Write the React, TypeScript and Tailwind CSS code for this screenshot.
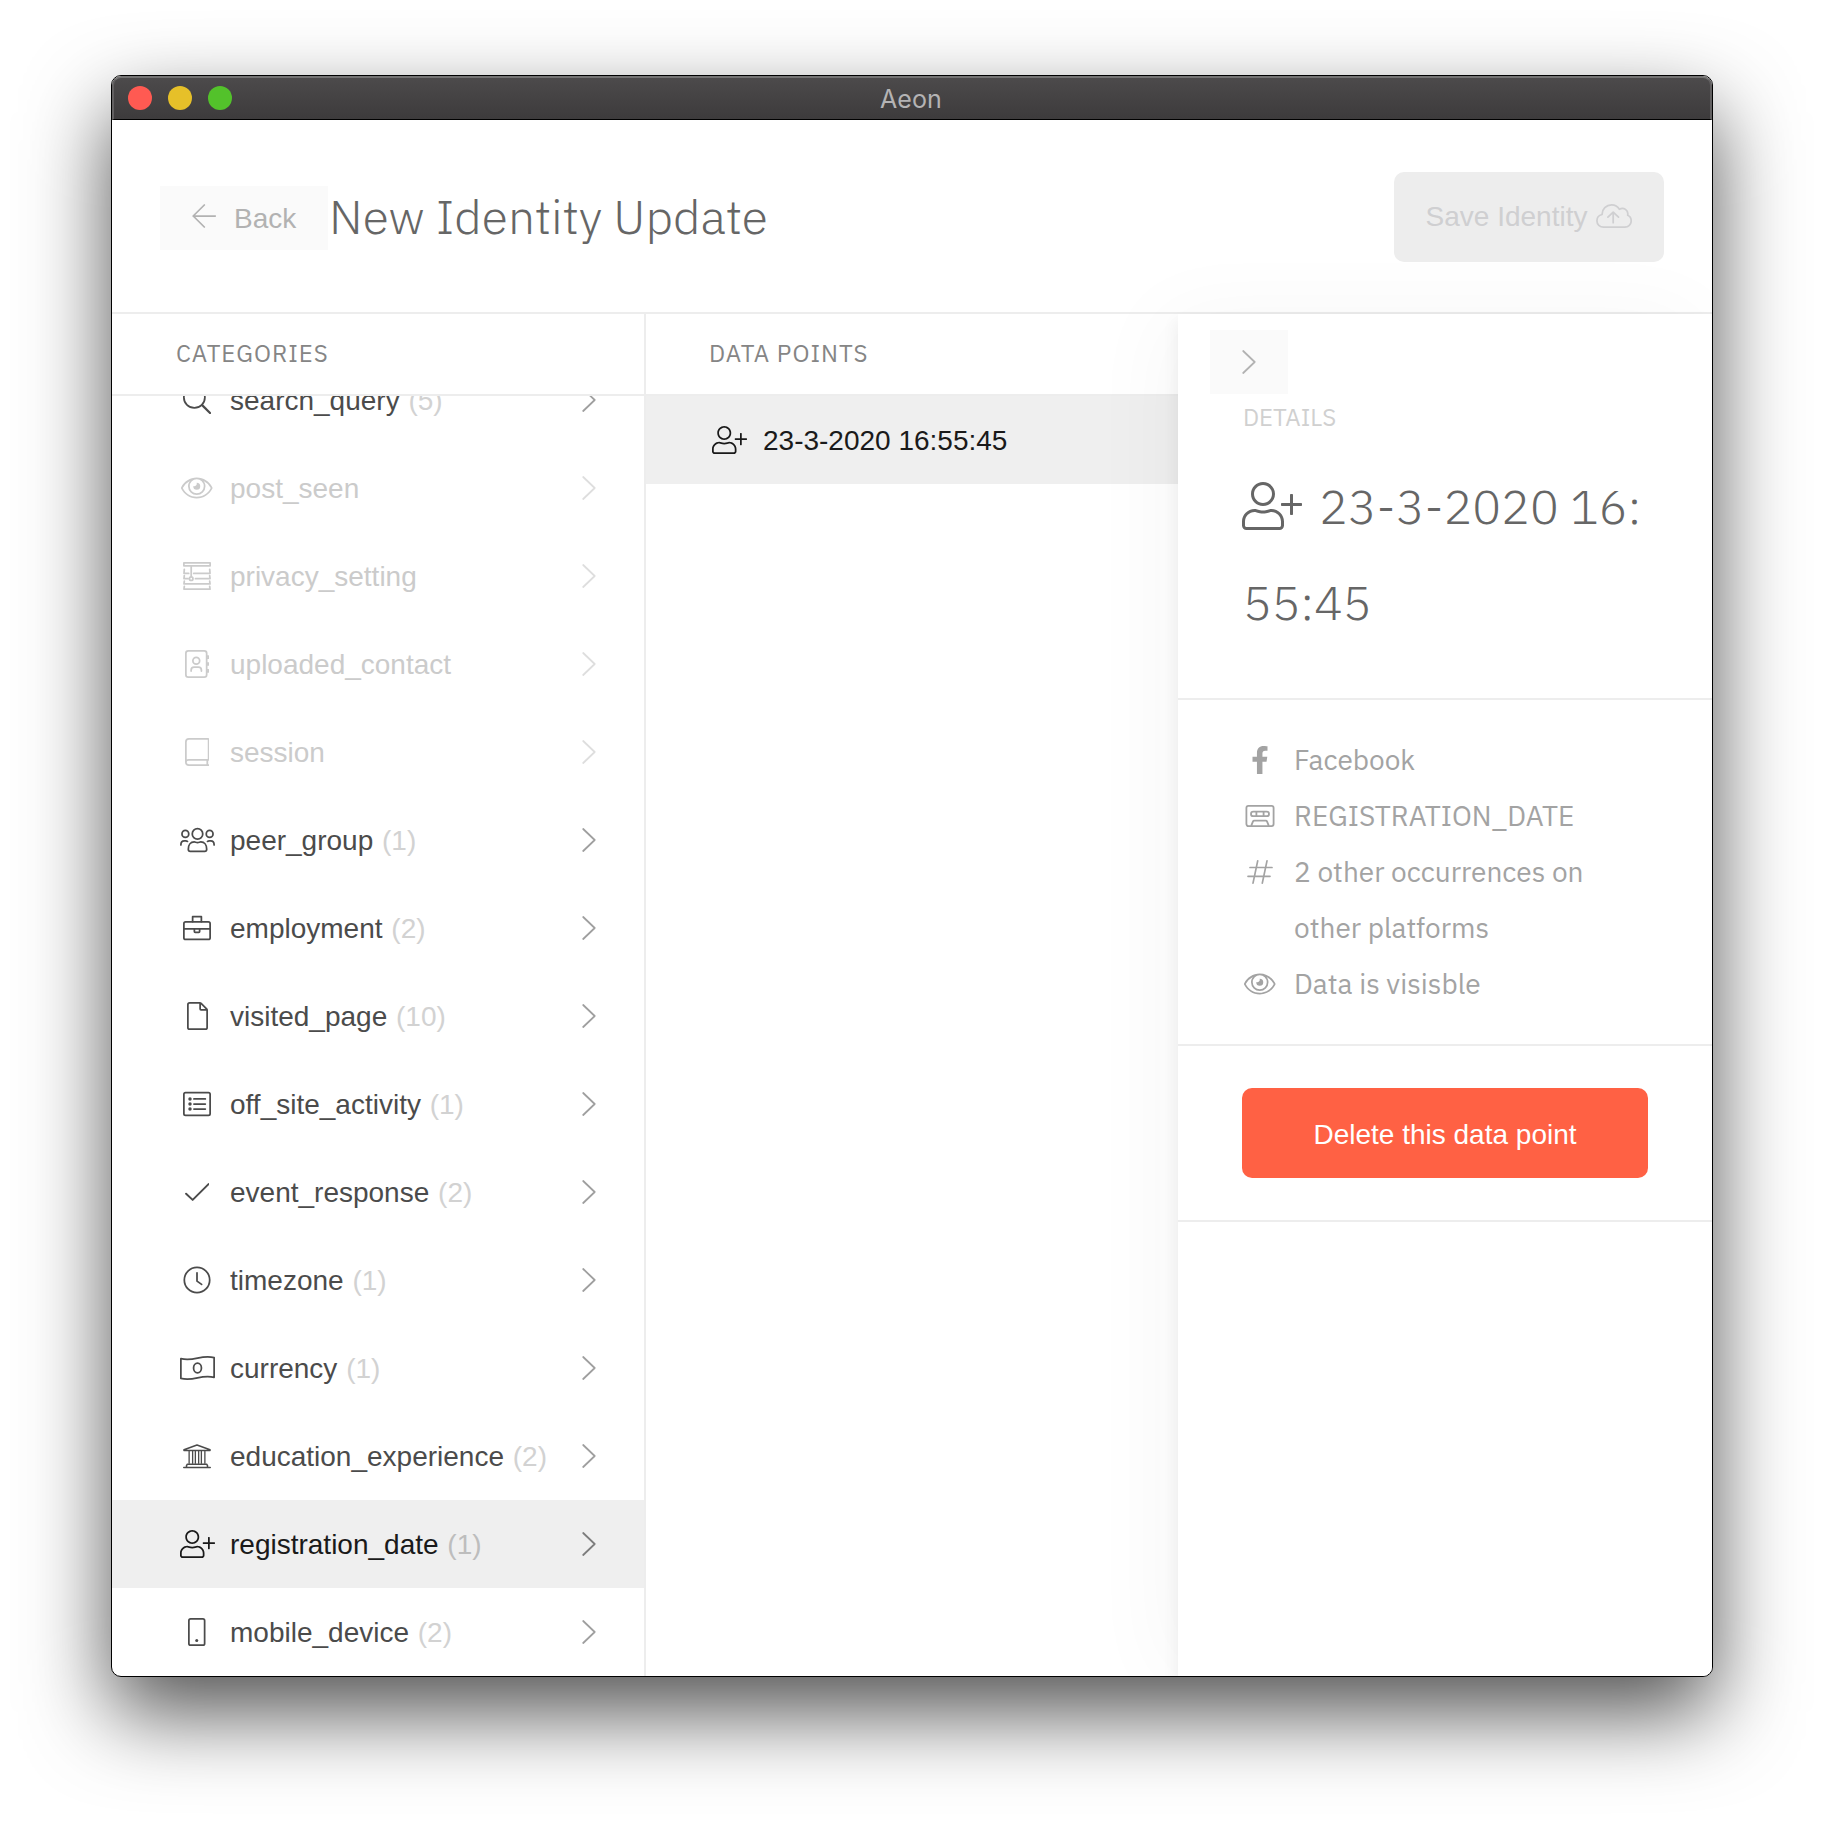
import type { ReactNode } from "react";
import { FaFacebookF } from "react-icons/fa";

const SANS = "font-['IBM_Plex_Sans','Noto_Sans',sans-serif]";
const ARIAL = "font-['Liberation_Sans',Arial,sans-serif]";

/* Line icons on a 512-unit grid, 28px tall by default. */
function Glyph({ w, className = "h-7", children }: { w: number; className?: string; children: ReactNode }) {
  return (
    <svg
      viewBox={`0 0 ${w} 512`}
      className={`${className} w-auto shrink-0`}
      fill="none"
      stroke="currentColor"
      strokeWidth={32}
      strokeLinecap="round"
      strokeLinejoin="round"
    >
      {children}
    </svg>
  );
}

const SearchIcon = () => (
  <Glyph w={512}>
    <circle cx="208" cy="208" r="192" />
    <path d="M350 350L494 494" strokeWidth={40} />
  </Glyph>
);

const EyeIcon = () => (
  <Glyph w={576}>
    <path
      fill="currentColor"
      stroke="none"
      d="M288 288a64 64 0 0 0 0-128c-1 0-1.88.24-2.85.29a47.5 47.5 0 0 1-60.86 60.86c0 1-.29 1.88-.29 2.85a64 64 0 0 0 64 64zm284.52-46.6C518.29 135.59 410.93 64 288 64S57.68 135.64 3.48 241.41a32.35 32.35 0 0 0 0 29.19C57.71 376.41 165.07 448 288 448s230.32-71.64 284.52-177.41a32.35 32.35 0 0 0 0-29.19zM288 96a128 128 0 1 1-128 128A128.14 128.14 0 0 1 288 96zm0 320c-107.36 0-205.46-61.31-256-160a294.78 294.78 0 0 1 129.78-129.33C140.91 153.69 128 187.17 128 224a160 160 0 0 0 320 0c0-36.83-12.91-70.31-33.78-97.33A294.78 294.78 0 0 1 544 256c-50.53 98.69-148.64 160-256 160z"
    />
  </Glyph>
);

const BlindsIcon = () => (
  <Glyph w={512}>
    <rect x="16" y="16" width="480" height="54" />
    <path d="M150 80V258M24 136L18 208H104M488 136L494 208H196M24 250L18 304H92M488 250L494 304H228M24 350L18 400H494L488 350M24 446L18 496H494L488 446" />
    <circle cx="150" cy="304" r="32" />
  </Glyph>
);

const AddressBookIcon = () => (
  <Glyph w={448}>
    <rect x="16" y="16" width="380" height="480" rx="44" />
    <circle cx="206" cy="196" r="62" />
    <path d="M112 384v-16c0-34 24-54 54-54h80c30 0 54 20 54 54v16" />
    <path d="M400 112h28v36h-28M400 238h28v36h-28M400 364h28v36h-28" />
  </Glyph>
);

const BookIcon = () => (
  <Glyph w={448}>
    <path d="M432 496H72c-32 0-56-22-56-56V72c0-32 24-56 56-56h348c8 0 12 4 12 12v356c0 8-4 16-12 16H72c-32 0-56 16-56 40M408 402v92" />
  </Glyph>
);

const UsersIcon = () => (
  <Glyph w={640}>
    <circle cx="320" cy="144" r="96" />
    <circle cx="98" cy="144" r="62" />
    <circle cx="542" cy="144" r="62" />
    <path d="M152 424c0-76 40-132 108-132 22 0 32 12 60 12s38-12 60-12c68 0 108 56 108 132 0 22-14 38-36 38H188c-22 0-36-16-36-38z" />
    <path d="M16 346c0-44 26-72 62-72h28c12 0 22 2 32 8M624 346c0-44-26-72-62-72h-28c-12 0-22 2-32 8" />
  </Glyph>
);

const BriefcaseIcon = () => (
  <Glyph w={512}>
    <rect x="16" y="144" width="480" height="320" rx="32" />
    <path d="M176 140V48h160v92M20 272h472M208 278v42c0 10 4 14 14 14h68c10 0 14-4 14-14v-42" />
  </Glyph>
);

const FileIcon = () => (
  <Glyph w={384}>
    <path d="M236 16H48c-18 0-32 14-32 32v416c0 18 14 32 32 32h288c18 0 32-14 32-32V148c0-8-4-16-10-22L258 26c-6-6-14-10-22-10zM240 20v108c0 10 6 16 16 16h108" />
  </Glyph>
);

const ListIcon = () => (
  <Glyph w={512}>
    <rect x="16" y="48" width="480" height="416" rx="30" />
    <path d="M200 164h208M200 256h208M200 348h208" />
    <g fill="currentColor" stroke="none">
      <circle cx="128" cy="164" r="32" />
      <circle cx="128" cy="256" r="32" />
      <circle cx="128" cy="348" r="32" />
    </g>
  </Glyph>
);

const CheckIcon = () => (
  <Glyph w={448}>
    <path d="M20 288L140 400 430 112" strokeWidth={36} />
  </Glyph>
);

const ClockIcon = () => (
  <Glyph w={512}>
    <circle cx="256" cy="256" r="232" />
    <path d="M256 124V276L340 336" />
  </Glyph>
);

const MoneyIcon = () => (
  <Glyph w={640}>
    <path d="M16 86C110 112 210 102 320 76S530 40 624 66V426C530 402 430 410 320 436S110 472 16 446Z" />
    <ellipse cx="320" cy="256" rx="72" ry="88" />
  </Glyph>
);

const LandmarkIcon = () => (
  <Glyph w={512}>
    <path d="M256 56L18 140v16H494v-16ZM64 456v-22l16-28H432l16 28v22M14 466H498" strokeWidth={28} />
    <path d="M112 170v220M176 170v220M226 170v220M286 170v220M336 170v220M400 170v220" strokeWidth={24} />
  </Glyph>
);

const UserPlusIcon = ({ className }: { className?: string }) => (
  <Glyph w={640} className={className}>
    <path
      fill="currentColor"
      stroke="none"
      d="M632 224h-88v-88c0-4.400-3.600-8-8-8h-16c-4.400 0-8 3.600-8 8v88h-88c-4.400 0-8 3.600-8 8v16c0 4.400 3.600 8 8 8h88v88c0 4.400 3.600 8 8 8h16c4.400 0 8-3.600 8-8v-88h88c4.400 0 8-3.600 8-8v-16c0-4.400-3.600-8-8-8zM313.600 288c-28.700 0-42.500 16-89.600 16s-60.800-16-89.600-16C60.200 288 0 348.200 0 422.400V464c0 26.500 21.500 48 48 48h352c26.500 0 48-21.500 48-48v-41.600c0-74.200-60.200-134.400-134.400-134.400zM416 464c0 8.800-7.200 16-16 16H48c-8.800 0-16-7.200-16-16v-41.600C32 365.900 77.900 320 134.400 320c19.600 0 39.100 16 89.600 16 50.400 0 70-16 89.600-16 56.500 0 102.400 45.900 102.400 102.400V464zM224 256c70.700 0 128-57.300 128-128S294.700 0 224 0 96 57.300 96 128s57.300 128 128 128zm0-224c52.900 0 96 43.100 96 96s-43.100 96-96 96-96-43.100-96-96 43.100-96 96-96z"
    />
  </Glyph>
);

const MobileIcon = () => (
  <Glyph w={320}>
    <rect x="16" y="16" width="288" height="480" rx="32" />
    <circle cx="160" cy="412" r="28" fill="currentColor" stroke="none" />
  </Glyph>
);

const ChevronIcon = () => (
  <svg viewBox="0 0 14 24" className="h-6 w-3.5 shrink-0" fill="none" stroke="currentColor" strokeWidth={1.75} strokeLinecap="round" strokeLinejoin="round">
    <path d="M1.200 1L12.700 12 1.200 23" />
  </svg>
);

const ArrowLeftIcon = () => (
  <svg viewBox="0 0 24 24" className="size-6 shrink-0" fill="none" stroke="currentColor" strokeWidth={1.75} strokeLinecap="round" strokeLinejoin="round">
    <path d="M23.200 12H1.200M12.300 1L1.200 12l11.100 11" />
  </svg>
);

const CloudUploadIcon = () => (
  <svg viewBox="0 0 36 24" className="h-6 w-9 shrink-0" fill="none" stroke="currentColor" strokeWidth={1.75} strokeLinecap="round" strokeLinejoin="round">
    <path d="M7.600 23.100C3.800 23.100.9 20.300.9 16.800c0-3 2.100-5.600 5.200-6.300C6 5.100 10.200.9 15.600.9c3.400 0 6.200 1.700 7.800 4.400 4.200-2.700 9.300.9 8.300 5.900 2.300 1 3.500 3.200 3.500 5.700 0 3.500-2.800 6.200-6.400 6.200Z" />
    <path d="M17.200 18.700V8.200M11.900 13.100l5.300-5 5.300 5" />
  </svg>
);

const CassetteIcon = () => (
  <svg viewBox="0 0 30 22" className="h-[22px] w-[30px] shrink-0" fill="none" stroke="currentColor" strokeWidth={1.800} strokeLinejoin="round">
    <rect x="1.400" y=".9" width="27.200" height="20.200" rx="2" />
    <rect x="6" y="6.600" width="18" height="4.600" rx="2.300" />
    <path d="M11.400 6.600v4.600M18.600 6.600v4.600M6.200 20.800l1.700-4.200c.3-.7.700-.9 1.400-.9h11.400c.7 0 1.100.2 1.400.9l1.700 4.200" />
  </svg>
);

const HashIcon = () => (
  <svg viewBox="0 0 26 24" className="h-6 w-[26px] shrink-0" fill="none" stroke="currentColor" strokeWidth={1.700} strokeLinecap="round">
    <path d="M3 7.500h22M1 16.300h22M10.700.9L6 23.100M20 .9l-4.700 22.200" />
  </svg>
);

type Category = { name: string; count?: number; icon: ReactNode; selected?: boolean };

const categories: Category[] = [
  { name: "search_query", count: 5, icon: <SearchIcon /> },
  { name: "post_seen", icon: <EyeIcon /> },
  { name: "privacy_setting", icon: <BlindsIcon /> },
  { name: "uploaded_contact", icon: <AddressBookIcon /> },
  { name: "session", icon: <BookIcon /> },
  { name: "peer_group", count: 1, icon: <UsersIcon /> },
  { name: "employment", count: 2, icon: <BriefcaseIcon /> },
  { name: "visited_page", count: 10, icon: <FileIcon /> },
  { name: "off_site_activity", count: 1, icon: <ListIcon /> },
  { name: "event_response", count: 2, icon: <CheckIcon /> },
  { name: "timezone", count: 1, icon: <ClockIcon /> },
  { name: "currency", count: 1, icon: <MoneyIcon /> },
  { name: "education_experience", count: 2, icon: <LandmarkIcon /> },
  { name: "registration_date", count: 1, icon: <UserPlusIcon />, selected: true },
  { name: "mobile_device", count: 2, icon: <MobileIcon /> },
];

function CategoryRow({ name, count, icon, selected }: Category) {
  const empty = count === undefined;
  const row = selected ? "bg-[#efefef] text-[#1a1a1a]" : empty ? "text-[#cbcbcb]" : "text-[#4b4b4b]";
  const chevron = selected ? "text-[#7c7c7c]" : empty ? "text-[#dedede]" : "text-[#9f9f9f]";
  const badge = selected ? "text-[#bdbdbd]" : "text-[#d2d2d2]";
  return (
    <li className={`flex h-22 shrink-0 items-center pr-12 pl-[67px] ${row}`}>
      <span className="flex w-9 shrink-0 justify-center">{icon}</span>
      <span className="ml-[15px] grow pt-0.5 whitespace-nowrap">
        {name} {!empty && <span className={`ml-px ${badge}`}>({count})</span>}
      </span>
      <span className={chevron}>
        <ChevronIcon />
      </span>
    </li>
  );
}

function InfoRow({ icon, children }: { icon: ReactNode; children: ReactNode }) {
  return (
    <li className="flex">
      <span className="flex h-14 w-9 shrink-0 items-center justify-center">{icon}</span>
      <span className="ml-4">{children}</span>
    </li>
  );
}

function TitleBar() {
  return (
    <div className="relative flex h-11 shrink-0 items-center justify-center rounded-t-[9px] border-x-2 border-t-2 border-b border-x-[#626061] border-t-[#747373] border-b-black bg-linear-to-b from-[#4c4a4b] to-[#3d3b3c]">
      <div className="absolute top-2 left-3.5 flex gap-4">
        <span className="size-6 rounded-full bg-[#ff5a52]" />
        <span className="size-6 rounded-full bg-[#e6c029]" />
        <span className="size-6 rounded-full bg-[#53c22b]" />
      </div>
      <span className="mr-0.5 pt-0.5 font-['Inter',sans-serif] text-[25px] leading-none tracking-[0.1px] text-[#b4b3b4]">Aeon</span>
    </div>
  );
}

export default function App() {
  return (
    <div className="flex h-[1824px] w-[1824px] overflow-hidden bg-white pt-[75px] pl-[111px]">
      <div className={`flex h-[1602px] w-[1602px] flex-col rounded-[10px] border border-black bg-white text-[28px] shadow-[0_36px_84px_rgba(0,0,0,0.68)] ${ARIAL}`}>
        <TitleBar />

        <div className="flex min-h-0 grow flex-col overflow-hidden rounded-b-[9px]">
          <header className="flex h-[194px] shrink-0 items-center border-b-2 border-[#ededed] pr-12 pl-12">
            <button className="mt-1 flex h-16 w-[168px] items-center bg-[#fafafa] pl-8 text-[#b2b2b2]">
              <span className="-mt-1">
                <ArrowLeftIcon />
              </span>
              <span className="ml-[18px] pt-0.5">Back</span>
            </button>
            <h1 className={`grow pl-px text-5xl font-light text-[#666] ${SANS}`}>New Identity Update</h1>
            <button className="mt-0.5 flex h-[90px] w-[270px] items-center justify-center rounded-[10px] bg-[#ededed] pb-0.5 text-[#cfcfd1]">
              <span className="pt-0.5">Save Identity</span>
              <span className="ml-[9px]">
                <CloudUploadIcon />
              </span>
            </button>
          </header>

          <main className="flex min-h-0 grow">
            <section className="flex w-[534px] shrink-0 flex-col border-r-2 border-[#ededed]">
              <h2 className={`flex h-[82px] shrink-0 items-center border-b-2 border-[#ededed] pb-0.5 pl-16 text-2xl tracking-[0.960px] text-[#858585] ${SANS}`}>
                CATEGORIES
              </h2>
              <ul className="flex min-h-0 grow flex-col justify-end overflow-hidden">
                {categories.map((c) => (
                  <CategoryRow key={c.name} {...c} />
                ))}
              </ul>
            </section>

            <section className="flex w-[532px] shrink-0 flex-col">
              <h2 className={`flex h-20 shrink-0 items-center pb-0.5 pl-[63px] text-2xl tracking-[1px] text-[#858585] ${SANS}`}>
                DATA POINTS
              </h2>
              <div className="flex h-[90px] shrink-0 items-center border-t-2 border-[#ededed] bg-[#efefef] pl-[66px] text-[#1a1a1a]">
                <UserPlusIcon />
                <span className="ml-4 pt-0.5">23-3-2020 16:55:45</span>
              </div>
            </section>

            <aside className={`flex grow flex-col bg-white leading-[2] shadow-[-16px_0_80px_rgba(0,0,0,0.035),-3px_7px_14px_rgba(0,0,0,0.05)] ${SANS}`}>
              <div className="h-[386px] shrink-0 border-b-2 border-[#ededed] pt-4">
                <button className="ml-8 flex h-16 w-[78px] items-center justify-center bg-[#fafafa] text-[#b2b2b2]">
                  <ChevronIcon />
                </button>
                <h3 className="pl-[65px] text-2xl leading-[46px] text-[#d0d0d0]">DETAILS</h3>
                <div className="mt-[18px] pl-16 text-5xl leading-[96px] font-light text-[#666]">
                  <div className="flex items-center">
                    <UserPlusIcon className="h-12" />
                    <span className="ml-[17px]">23-3-2020 16:</span>
                  </div>
                  <div className="pl-px">55:45</div>
                </div>
              </div>

              <ul className="shrink-0 border-b-2 border-[#ededed] py-8 pl-16 leading-[56px] text-[#a3a3a3]">
                <InfoRow icon={<FaFacebookF />}>Facebook</InfoRow>
                <InfoRow icon={<CassetteIcon />}>REGISTRATION_DATE</InfoRow>
                <InfoRow icon={<HashIcon />}>
                  2 other occurrences on
                  <br />
                  other platforms
                </InfoRow>
                <InfoRow icon={<EyeIcon />}>Data is visisble</InfoRow>
              </ul>

              <div className="shrink-0 border-b-2 border-[#ededed] px-16 py-[42px]">
                <button className={`block h-[90px] w-full rounded-[10px] bg-[#ff6144] pt-[3px] leading-none text-white ${ARIAL}`}>
                  Delete this data point
                </button>
              </div>
            </aside>
          </main>
        </div>
      </div>
    </div>
  );
}
